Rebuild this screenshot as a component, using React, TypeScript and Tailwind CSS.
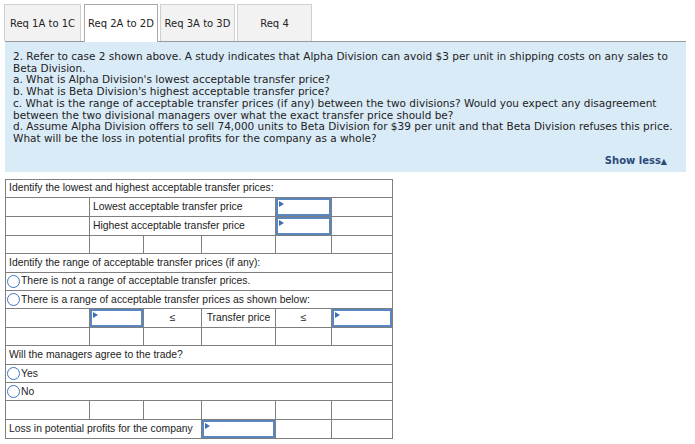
import React from "react";

const Inp = () => (
  <td className="p-0 border border-[#7f7f7f]">
    <div className="relative h-[18px] border-2 border-[#5b87c0] bg-white">
      <div className="absolute left-[1px] top-[1px] w-0 h-0 border-t-[3px] border-b-[3px] border-l-[5px] border-t-transparent border-b-transparent border-l-[#3d6fb5]" />
    </div>
  </td>
);

const C = ({ children, span, center }: { children?: React.ReactNode; span?: number; center?: boolean }) => (
  <td colSpan={span} className={`border border-[#7f7f7f] px-[3px] py-0 whitespace-nowrap ${center ? "text-center" : ""}`}>
    {children}
  </td>
);

const Radio = ({ label }: { label: string }) => (
  <td colSpan={6} className="border border-[#7f7f7f] px-0 py-0 whitespace-nowrap">
    <div className="flex items-center pl-[1px]">
      <span className="inline-block w-[13px] h-[13px] rounded-full border border-[#3b74c4] bg-white mr-[1px]" />
      <span>{label}</span>
    </div>
  </td>
);

const EmptyRow = () => (
  <tr className="h-[18.3px]">
    <C /><C /><C /><C /><C /><C />
  </tr>
);

export default function App() {
  const tabs = ["Req 1A to 1C", "Req 2A to 2D", "Req 3A to 3D", "Req 4"];
  return (
    <div className="w-[695px] h-[444px] bg-white pt-[4px] pl-[4px] overflow-hidden" style={{ fontFamily: '"DejaVu Sans", Verdana, sans-serif' }}>
      <div className="flex items-end gap-[2px] pl-0">
        {tabs.map((t, i) => (
          <div
            key={t}
            className={`h-[37px] ${i === 0 ? "w-[77px]" : i === 1 ? "w-[74px] ml-[1px]" : "w-[75px]"} flex items-center justify-center text-[10px] text-[#222] border ${
              i === 1 ? "bg-white border-[#aaa] border-b-0 relative z-10 -mb-px h-[38px]" : "bg-[#f2f2f2] border-[#cfcfcf] border-b-0"
            }`}
          >
            {t}
          </div>
        ))}
      </div>
      <div className="w-[681px] ml-[1px] bg-[#daebf8] border-t border-[#9a9a9a] pt-[9px] pl-[8px] pr-[8px] pb-[4px]">
        <div className="text-[10.5px] leading-[11.7px] text-[#222]">
          <div>2. Refer to case 2 shown above. A study indicates that Alpha Division can avoid $3 per unit in shipping costs on any sales to Beta Division.</div>
          <div>a. What is Alpha Division's lowest acceptable transfer price?</div>
          <div>b. What is Beta Division's highest acceptable transfer price?</div>
          <div>c. What is the range of acceptable transfer prices (if any) between the two divisions? Would you expect any disagreement between the two divisional managers over what the exact transfer price should be?</div>
          <div>d. Assume Alpha Division offers to sell 74,000 units to Beta Division for $39 per unit and that Beta Division refuses this price. What will be the loss in potential profits for the company as a whole?</div>
        </div>
        <div className="flex justify-end mt-[8px] pr-[11px]">
          <span className="text-[10px] font-bold text-[#2b4a78]">Show less<span className="text-[8px]">▲</span></span>
        </div>
      </div>
      <table
        className="mt-[7px] ml-[1px] border-collapse table-fixed w-[387px] text-[10.4px] text-[#222]"
        style={{ fontFamily: '"Liberation Sans", Arial, sans-serif' }}
      >
        <colgroup>
          <col className="w-[84px]" />
          <col className="w-[54px]" />
          <col className="w-[58px]" />
          <col className="w-[74px]" />
          <col className="w-[56px]" />
          <col className="w-[61px]" />
        </colgroup>
        <tbody>
          <tr className="h-[18.3px]"><C span={6}>Identify the lowest and highest acceptable transfer prices:</C></tr>
          <tr className="h-[18.3px]"><C /><C span={3}>Lowest acceptable transfer price</C><Inp /><C /></tr>
          <tr className="h-[18.3px]"><C /><C span={3}>Highest acceptable transfer price</C><Inp /><C /></tr>
          <EmptyRow />
          <tr className="h-[18.3px]"><C span={6}>Identify the range of acceptable transfer prices (if any):</C></tr>
          <tr className="h-[18.3px]"><Radio label="There is not a range of acceptable transfer prices." /></tr>
          <tr className="h-[18.3px]"><Radio label="There is a range of acceptable transfer prices as shown below:" /></tr>
          <tr className="h-[18.3px]"><C /><Inp /><C center>≤</C><C center>Transfer price</C><C center>≤</C><Inp /></tr>
          <EmptyRow />
          <tr className="h-[18.3px]"><C span={6}>Will the managers agree to the trade?</C></tr>
          <tr className="h-[18.3px]"><Radio label="Yes" /></tr>
          <tr className="h-[18.3px]"><Radio label="No" /></tr>
          <EmptyRow />
          <tr className="h-[18.3px]"><C span={3}>Loss in potential profits for the company</C><Inp /><C /><C /></tr>
        </tbody>
      </table>
    </div>
  );
}
